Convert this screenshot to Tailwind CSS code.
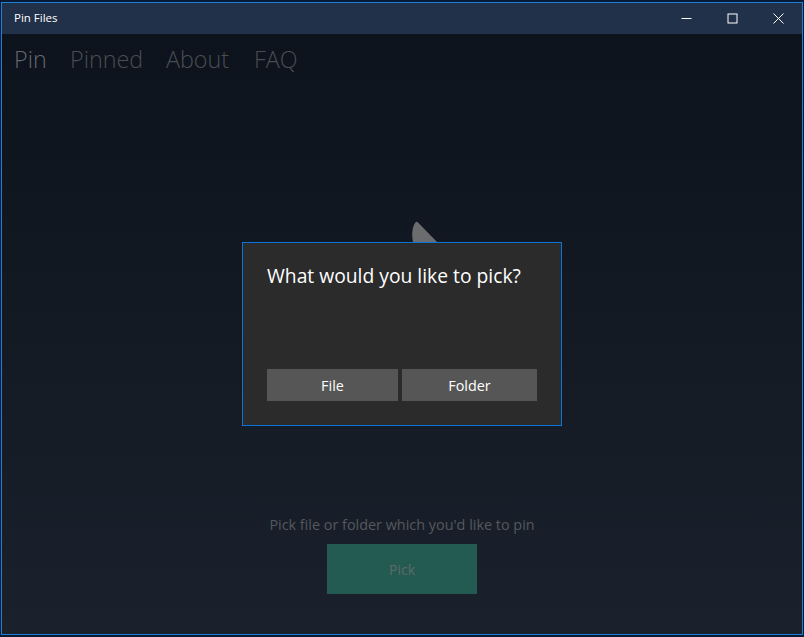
<!DOCTYPE html>
<html>
<head>
<meta charset="utf-8">
<script src="https://cdn.jsdelivr.net/npm/@tailwindcss/browser@4"></script>
</head>
<body class="bg-[#0a1a33] overflow-hidden">
<div class="w-[804px] h-[637px] pt-[2px] pl-[1px] pr-[1px] pb-[2px] font-['Open_Sans','Noto_Sans',sans-serif]">
  <div class="relative w-full h-full border border-[#1a7fd6] flex flex-col">
    <div class="h-[31px] shrink-0 bg-[#22314a] flex items-center justify-between pb-[1px]">
      <span class="pl-[12px] text-[11.5px] text-white">Pin Files</span>
      <div class="flex items-center h-full pr-[1px]">
        <div class="w-[46px] flex justify-center"><svg width="11" height="11" viewBox="0 0 11 11"><path d="M0.500 5.500h10" stroke="#fff" fill="none"/></svg></div>
        <div class="w-[46px] flex justify-center"><svg width="11" height="11" viewBox="0 0 11 11"><rect x="1" y="1" width="9" height="9" stroke="#fff" fill="none"/></svg></div>
        <div class="w-[46px] flex justify-center"><svg width="11" height="11" viewBox="0 0 11 11"><path d="M0.500 0.500l10 10M10.500 0.500l-10 10" stroke="#fff" fill="none"/></svg></div>
      </div>
    </div>
    <div class="relative flex-1 flex flex-col bg-gradient-to-b from-[#0d131c] to-[#1a212c]">
      <div class="flex items-center pl-[12px] pt-[8px] text-[23.300px] font-light leading-[34px] text-[#4a4d52]">
        <span class="w-[56px] text-[#65686c]">Pin</span><span class="w-[96px]">Pinned</span><span class="w-[88px]">About</span><span>FAQ</span>
      </div>
      <div class="flex-1 flex flex-col items-center justify-end pb-[40px]">
        <div class="text-[14.4px] leading-[20px] text-[#55585c] mb-[9px]">Pick file or folder which you'd like to pin</div>
        <div class="w-[150px] h-[50px] bg-[#235a52] flex items-center justify-center text-[14px] text-[#5f6a67]">Pick</div>
      </div>
      <svg class="absolute left-[408px] top-[187px]" width="30" height="21" viewBox="0 0 30 21"><path d="M3 21C1.500 14 2 7 5 2Q6.500 0 8 1.500L27 21Z" fill="#6b6c6e"/></svg>
      <div class="absolute left-[240px] top-[208px] w-[320px] h-[184px] border border-[#0a74d6] bg-[#2b2b2b] pt-[18px] px-[24px]">
        <div class="text-[19.3px] leading-[30px] text-white">What would you like to pick?</div>
        <div class="absolute left-[24px] top-[126px] flex gap-[4px]">
          <div class="w-[131px] h-[32px] pt-[1px] bg-[#565656] flex items-center justify-center text-[14.400px] text-white">File</div>
          <div class="w-[135px] h-[32px] pt-[1px] bg-[#565656] flex items-center justify-center text-[14.400px] text-white">Folder</div>
        </div>
      </div>
    </div>
  </div>
</div>
</body>
</html>
